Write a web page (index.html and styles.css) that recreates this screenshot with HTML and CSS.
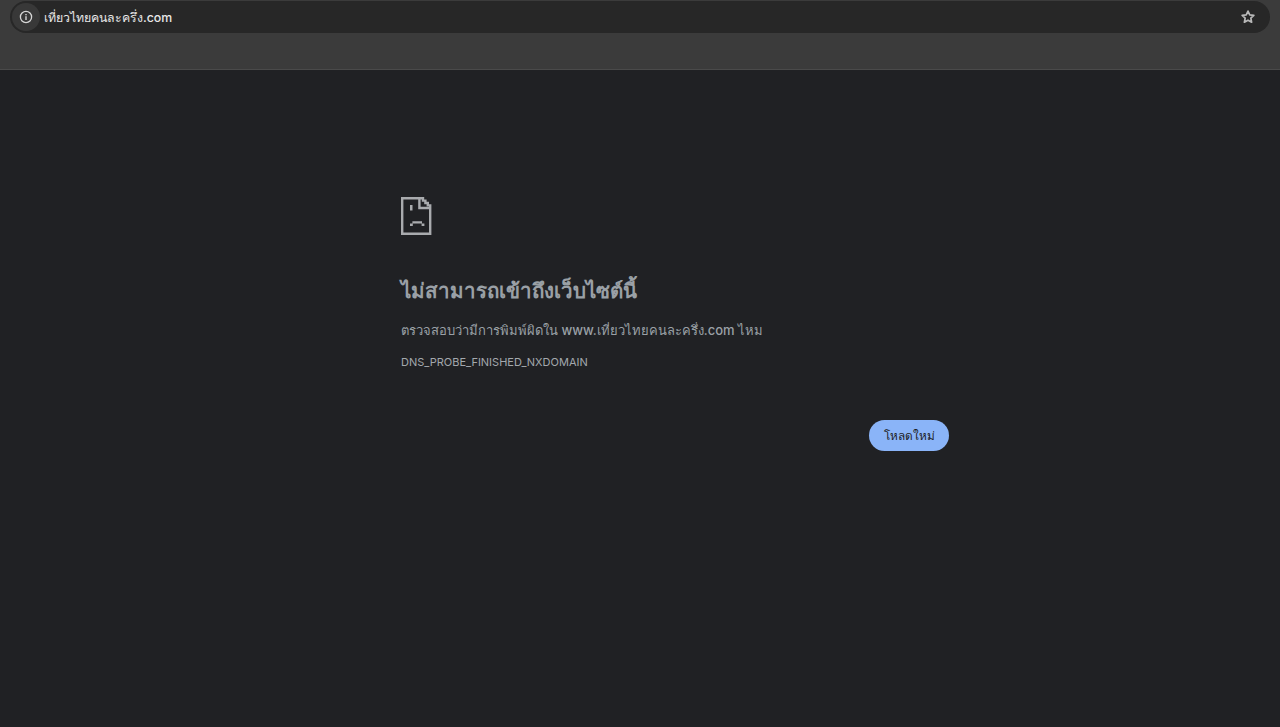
FILE: index.html
```html
<!DOCTYPE html>
<html lang="th">
<head>
<meta charset="utf-8">
<title>เที่ยวไทยคนละครึ่ง.com</title>
<link rel="stylesheet" href="styles.css">
</head>
<body>
<header class="toolbar">
  <div class="omnibox">
    <span class="info-chip">
      <svg class="info-icon" viewBox="0 0 14 14" width="14" height="14" aria-hidden="true">
        <circle cx="7" cy="7" r="5.6" fill="none" stroke="currentColor" stroke-width="1.3"/>
        <rect x="6.3" y="6.2" width="1.4" height="3.8" fill="currentColor"/>
        <rect x="6.3" y="4" width="1.4" height="1.3" fill="currentColor"/>
      </svg>
    </span>
    <span class="url">เที่ยวไทยคนละครึ่ง.com</span>
    <svg class="star" viewBox="0 0 16 16" width="16" height="16" aria-hidden="true">
      <path d="M8 2.1l1.75 3.77 4.1.5-3.03 2.8.8 4.06L8 11.2l-3.62 2.03.8-4.06-3.03-2.8 4.1-.5z" fill="none" stroke="currentColor" stroke-width="1.7" stroke-linejoin="round"/>
    </svg>
  </div>
</header>
<main class="page">
  <div class="content">
    <svg class="sad-page" viewBox="0 0 31 38" width="31" height="38" aria-hidden="true">
      <path d="M1.2 1.2H22v2.4h2.4V6h2.4v2.4h2.4V11V36.8H1.2Z" fill="none" stroke="currentColor" stroke-width="2.4"/>
      <path d="M18.4 1.2V11H30" fill="none" stroke="currentColor" stroke-width="2.4"/>
      <rect x="9" y="8" width="2.5" height="5.5" fill="currentColor"/>
      <path d="M9 29v-2.4h2.4v-2.4h9.6v2.4h2.4V29H20.600v-2.400H11.800V29z" fill="currentColor"/>
    </svg>
    <h1 class="title">ไม่สามารถเข้าถึงเว็บไซต์นี้</h1>
    <p class="message">ตรวจสอบว่ามีการพิมพ์ผิดใน www.เที่ยวไทยคนละครึ่ง.com ไหม</p>
    <p class="code">DNS_PROBE_FINISHED_NXDOMAIN</p>
    <div class="actions"><button class="reload" type="button">โหลดใหม่</button></div>
  </div>
</main>
</body>
</html>
```
FILE: styles.css
```css
* { box-sizing: border-box; }
html, body { height: 100%; }
body {
  margin: 0;
  display: flex;
  flex-direction: column;
  background: #202124;
  font-family: Inter, "Noto Sans", "Liberation Sans", "Noto Sans CJK SC", sans-serif;
  overflow: hidden;
}
.toolbar {
  height: 70px;
  flex: none;
  padding: 1px 10px 0;
  background: #3b3b3b;
  border-bottom: 1px solid #4a4a4a;
}
.omnibox {
  height: 32px;
  display: flex;
  align-items: center;
  border-radius: 16px;
  background: #272727;
  color: #e6e6e6;
}
.info-chip {
  width: 28px;
  height: 28px;
  margin-left: 2px;
  display: flex;
  align-items: center;
  justify-content: center;
  border-radius: 50%;
  background: #383838;
}
.info-icon { color: #d6d6d6; }
.url {
  margin-left: 4px;
  flex: 1;
  font-size: 12.3px;
  font-weight: 500;
  color: #e8e8e8;
}
.star { margin-right: 14px; color: #b8b8b8; }
.page {
  flex: 1;
  padding: 127px 0 0 401px;
}
.content { width: 548px; }
.sad-page { display: block; color: #a9abae; }
.title {
  margin: 41px 0 0;
  font-size: 20.5px;
  line-height: 30px;
  font-weight: 700;
  color: #9aa0a6;
}
.message {
  margin: 14px 0 0;
  font-size: 13px;
  line-height: 20px;
  font-weight: 500;
  color: #9aa0a6;
}
.code {
  margin: 14px 0 0;
  font-size: 11px;
  line-height: 16px;
  color: #a3a8ad;
}
.actions {
  margin-top: 50px;
  display: flex;
  justify-content: flex-end;
}
.reload {
  width: 80px;
  height: 31px;
  padding: 0;
  border: 0;
  border-radius: 16px;
  background: #8ab4f8;
  color: #202124;
  font: 500 11.8px Inter, "Noto Sans", sans-serif;
}
```
